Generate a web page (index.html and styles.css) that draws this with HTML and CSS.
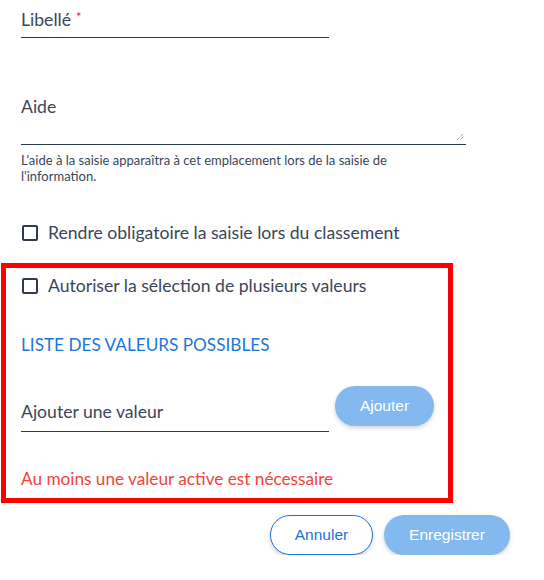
FILE: index.html
```html
<!DOCTYPE html>
<html lang="fr">
<head>
<meta charset="utf-8">
<link rel="stylesheet" href="styles.css">
</head>
<body>
<div class="form">
  <div class="field field-libelle">
    <span class="label">Libellé</span><span class="req">*</span>
  </div>
  <div class="field-aide">
    <div class="label aide-label">Aide</div>
    <div class="textarea">
      <svg class="grip" width="8" height="8" viewBox="0 0 8 8"><path d="M7 1 L1 7 M7 4 L4 7" stroke="#6b7280" stroke-width="1" stroke-dasharray="1 1" fill="none"/></svg>
    </div>
    <p class="hint">L'aide à la saisie apparaîtra à cet emplacement lors de la saisie de l'information.</p>
  </div>
  <label class="check check-first"><span class="box"></span><span>Rendre obligatoire la saisie lors du classement</span></label>
  <div class="highlight">
    <label class="check"><span class="box"></span><span>Autoriser la sélection de plusieurs valeurs</span></label>
    <h3 class="section">LISTE DES VALEURS POSSIBLES</h3>
    <div class="add-row">
      <div class="field field-add"><span class="label">Ajouter une valeur</span></div>
      <button class="btn btn-fill btn-add">Ajouter</button>
    </div>
    <p class="error">Au moins une valeur active est nécessaire</p>
  </div>
  <div class="actions">
    <button class="btn btn-outline">Annuler</button>
    <button class="btn btn-fill btn-save">Enregistrer</button>
  </div>
</div>
</body>
</html>
```
FILE: styles.css
```css
* { box-sizing: border-box; }
html, body { margin: 0; padding: 0; background: #fff; }
body { font-family: Lato, "Noto Sans", sans-serif; color: #3a4659; }
.form { padding-left: 21px; width: 544px; }
.field { border-bottom: 1px solid #2e3a4e; }
.label { font-size: 17.6px; line-height: 20px; }
.field-libelle { width: 308px; height: 38px; padding-top: 10px; }
.req { color: #e8174a; font-size: 13px; margin-left: 5px; vertical-align: 4px; line-height: 10px; }
.field-aide { margin-top: 59px; }
.aide-label { height: 20px; }
.textarea { width: 445px; height: 28px; border-bottom: 1px solid #2e3a4e; position: relative; }
.grip { position: absolute; right: 2px; bottom: 3px; }
.hint { margin: 7px 0 0; font-size: 13px; line-height: 16px; max-width: 400px; color: #3a4659; }
.check { display: flex; align-items: center; gap: 10px; font-size: 17.6px; line-height: 20px; margin-left: 1px; }
.check-first { margin-top: 39px; }
.box { width: 16px; height: 16px; border: 2px solid #2e3a4e; border-radius: 2px; flex: none; }
.highlight { margin-top: 20px; margin-left: -20px; width: 452px; border: 5px solid #ff0000; padding: 8px 0 0 15px; height: 240px; }
.section { margin: 38px 0 0; font-weight: 400; font-size: 17.2px; line-height: 22px; color: #1a77dd; }
.add-row { display: flex; align-items: flex-start; margin-top: 30px; }
.field-add { width: 308px; height: 46px; padding-top: 16px; }
.btn { font-family: "Liberation Sans", Arial, sans-serif; font-size: 15.5px; height: 40px; border-radius: 20px; cursor: pointer; padding: 0; }
.btn-fill { background: #83b9ef; color: #fff; border: none; box-shadow: 0 2px 4px rgba(0,0,0,0.18); }
.btn-add { width: 99px; margin-left: 6px; }
.error { margin: 36px 0 0; font-size: 17.2px; line-height: 22px; color: #f2433a; }
.actions { display: flex; justify-content: flex-end; gap: 11px; width: 489px; margin-top: 12px; }
.btn-outline { width: 103px; background: #fff; color: #1a73d9; border: 1px solid #1a73d9; box-shadow: 0 2px 4px rgba(0,0,0,0.18); }
.btn-save { width: 126px; }
```
